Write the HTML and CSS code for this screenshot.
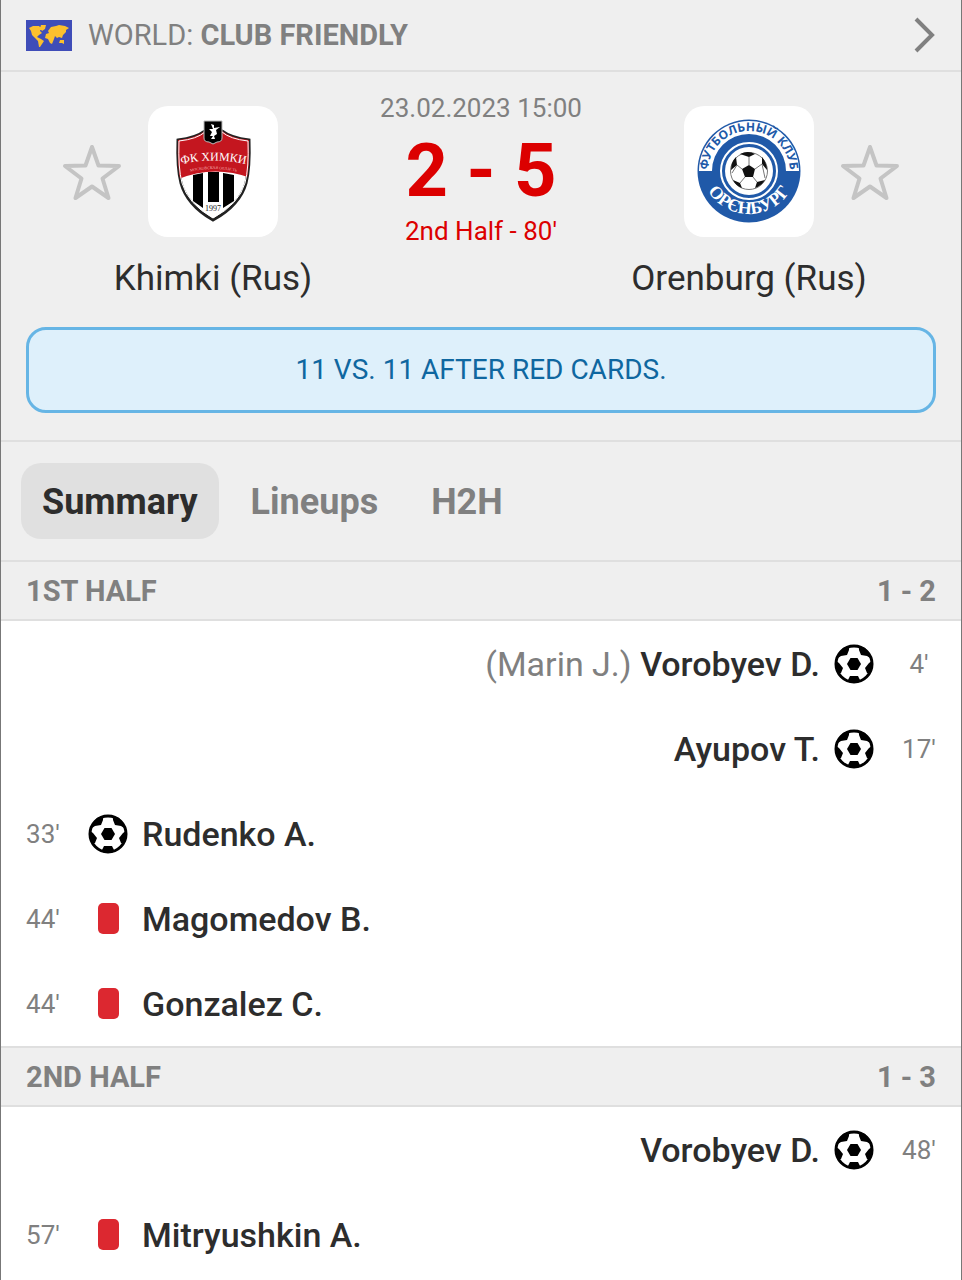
FILE: index.html
```html
<!DOCTYPE html>
<html lang="en">
<head>
    <meta charset="UTF-8">
    <meta name="viewport" content="width=device-width, initial-scale=1.0">
    <title>Khimki - Orenburg</title>
    <link rel="stylesheet" href="styles.css">
</head>
<body>
<!-- shared icons -->
<svg class="sprite" aria-hidden="true">
    <symbol id="ball" viewBox="0 0 40 40">
        <circle cx="20" cy="20" r="18" fill="#fff" stroke="#000" stroke-width="3"/>
        <path d="M5 9l4-5 6-2 0 4-2 5-6 1-3 2zM35 9l-4-5-6-2 0 4 2 5 6 1 3 2zM2 17l3 2 4 5-2 5-4 0zM38 17l-3 2-4 5 2 5 4 0zM16 32h8l2 4-2 3h-8l-2-3z" fill="#000"/>
        <path d="M16.500 14h7l3.500 6-3.500 6h-7l-3.500-6z" fill="#000"/>
    </symbol>
    <symbol id="star" viewBox="0 0 60 60">
        <path d="M30 5l6.500 18.500 20.500.5-16.500 12.500 6 19.500-16.500-11.500-16.500 11.500 6-19.500-16.500-12.500 20.500-.5z" fill="none" stroke="#c4c4c4" stroke-width="4" stroke-linejoin="round"/>
    </symbol>
</svg>

<main class="page">
    <a class="league" href="#">
        <svg class="flag" viewBox="0 0 46 31" aria-hidden="true">
            <path fill="#3f4db8" d="M0 0h46v31H0z"/>
            <path fill="#fcc02e" d="M3 8l4-2 6 0 2 2-1 3 2 2-3 2-2 2 4 2 3 2-2 3-2 3-1 0-1-6-3-3-3-3-1-4zM15 5l5 0-1 4-3 2-2-3zM22 11l3-4 5-1 3-1 6 1 4 2-3 2 0 2-3 3-1 3-3-1-2 1-2-2-1 3-2 5-2-1-2-4-3-1 1-4 3-1zM34 20l4 0 0 4-2-1-3 0z"/>
        </svg>
        <span class="league-name">WORLD: <b>CLUB FRIENDLY</b></span>
        <svg class="chevron" viewBox="0 0 24 40" aria-hidden="true">
            <path d="M4 4l16 16L4 36" fill="none" stroke="#808080" stroke-width="4"/>
        </svg>
    </a>

    <section class="match">
        <div class="teams">
            <div class="team">
                <button class="fav fav-left" type="button" aria-label="Add Khimki to favourites"><svg><use href="#star"/></svg></button>
                <div class="logo">
                    <svg viewBox="0 0 130 130" aria-hidden="true">
                        <defs>
                            <clipPath id="shield"><path d="M30 34Q48 32 57 25h17Q83 32 101 34Q102 62 98 77Q92 99 65 114Q39 99 33 77Q29 62 30 34z"/></clipPath>
                            <path id="khimkiArc" d="M30 59Q65 50 101 59"/>
                            <path id="regionArc" d="M34 68Q65 58 97 68"/>
                        </defs>
                        <path d="M30 34Q48 32 57 25h17Q83 32 101 34Q102 62 98 77Q92 99 65 114Q39 99 33 77Q29 62 30 34z" fill="#fff" stroke="#222" stroke-width="3"/>
                        <g clip-path="url(#shield)">
                            <path d="M28 20h75v52Q65 58 28 74z" fill="#c4161f"/>
                            <path d="M45 69l10-2v35l-10-7zM60 66h11v30H60zM75 67l11 2v26l-11 7z" fill="#000"/>
                        </g>
                        <path d="M31 35Q49 33 57 26h17Q82 33 100 35Q101 62 97 77Q91 98 65 112Q40 98 34 77Q30 62 31 35z" fill="none" stroke="#fff"/>
                        <path d="M56 15h18v17q0 4-5 4l-4 2-4-2q-5 0-5-4z" fill="#000" stroke="#bbb"/>
                        <path d="M63 18l3 1 0 3 6-1-4 3 1 4-3 2 1 3-4 0 2-3-3 0 2-4-3-3 4 0z" fill="#fff"/>
                        <text class="khimki-text"><textPath href="#khimkiArc" startOffset="50%">ФК ХИМКИ</textPath></text>
                        <text class="region-text"><textPath href="#regionArc" startOffset="50%">МОСКОВСКАЯ ОБЛАСТЬ</textPath></text>
                        <text class="year-text" x="65" y="105">1997</text>
                    </svg>
                </div>
                <h2 class="team-name">Khimki (Rus)</h2>
            </div>

            <div class="score">
                <time class="date" datetime="2023-02-23T15:00">23.02.2023 15:00</time>
                <strong class="result">2 - 5</strong>
                <span class="stage">2nd Half - 80'</span>
            </div>

            <div class="team">
                <div class="logo">
                    <svg viewBox="0 0 130 130" aria-hidden="true">
                        <defs>
                            <path id="clubArc" d="M24 66A41 41 0 0 1 106 66"/>
                            <path id="cityArc" d="M17 60A48 48 0 0 0 113 60"/>
                        </defs>
                        <circle cx="65" cy="65" r="51.500" fill="#2059a8"/>
                        <path d="M15 65A50 50 0 0 1 115 65H102A37 37 0 0 0 28 65z" fill="#fff"/>
                        <circle cx="65" cy="65" r="28" fill="none" stroke="#fff" stroke-width="2"/>
                        <circle cx="65" cy="65" r="24" fill="#fff"/>
                        <circle cx="65" cy="65" r="18.500" fill="#fff" stroke="#777"/>
                        <path d="M65 59l6 4-2 8h-8l-3-8zM56 48q8-4 15 0l-6 3zM78 51q5 6 5 13l-5-6zM81 74q-4 6-10 8l2-6zM58 82q-6-2-9-8l7 3zM47 64q0-8 5-13l1 8z" fill="#111"/>
                        <path d="M65 51v8M71 63l7-5M69 71l4 5M61 71l-5 6M58 63l-5-4M53 59l-5 8M78 58l3 14" fill="none" stroke="#777"/>
                        <text class="club-text"><textPath href="#clubArc" startOffset="50%">ФУТБОЛЬНЫЙ КЛУБ</textPath></text>
                        <text class="city-text"><textPath href="#cityArc" startOffset="50%">ОРЄНБУРГ</textPath></text>
                    </svg>
                </div>
                <button class="fav fav-right" type="button" aria-label="Add Orenburg to favourites"><svg><use href="#star"/></svg></button>
                <h2 class="team-name">Orenburg (Rus)</h2>
            </div>
        </div>
        <p class="notice">11 VS. 11 AFTER RED CARDS.</p>
    </section>

    <nav class="tabs">
        <button class="tab active" type="button">Summary</button>
        <button class="tab" type="button">Lineups</button>
        <button class="tab" type="button">H2H</button>
    </nav>

    <section>
        <h3 class="half"><span>1ST HALF</span><span>1 - 2</span></h3>
        <ul class="events">
            <li class="event away"><span class="minute">4'</span><svg class="icon"><use href="#ball"/></svg><span class="player"><span class="assist">(Marin J.)</span> Vorobyev D.</span></li>
            <li class="event away"><span class="minute">17'</span><svg class="icon"><use href="#ball"/></svg><span class="player">Ayupov T.</span></li>
            <li class="event"><span class="minute">33'</span><svg class="icon"><use href="#ball"/></svg><span class="player">Rudenko A.</span></li>
            <li class="event"><span class="minute">44'</span><span class="icon"><i class="red-card"></i></span><span class="player">Magomedov B.</span></li>
            <li class="event"><span class="minute">44'</span><span class="icon"><i class="red-card"></i></span><span class="player">Gonzalez C.</span></li>
        </ul>
    </section>

    <section>
        <h3 class="half"><span>2ND HALF</span><span>1 - 3</span></h3>
        <ul class="events">
            <li class="event away"><span class="minute">48'</span><svg class="icon"><use href="#ball"/></svg><span class="player">Vorobyev D.</span></li>
            <li class="event"><span class="minute">57'</span><span class="icon"><i class="red-card"></i></span><span class="player">Mitryushkin A.</span></li>
        </ul>
    </section>
</main>
</body>
</html>
```
FILE: styles.css
```css
* {
    box-sizing: border-box;
}
body {
    margin: 0;
    font-family: Roboto, "Liberation Sans", sans-serif;
    background-color: #fff;
    color: #2d2d2d;
}
h2, h3, p, ul {
    margin: 0;
    padding: 0;
}
button {
    border: none;
    padding: 0;
    background: none;
    font-family: inherit;
    cursor: pointer;
}
.sprite {
    display: none;
}
.page {
    min-height: 100vh;
    border-left: 1px solid #777;
    border-right: 1px solid #777;
}

/* league bar */
.league {
    display: flex;
    align-items: center;
    gap: 16px;
    height: 72px;
    padding: 0 25px;
    background-color: #efefef;
    border-bottom: 2px solid #dfdfdf;
    color: #808080;
    font-size: 29px;
    text-decoration: none;
}
.flag {
    width: 46px;
    height: 31px;
}
.league-name {
    flex: 1;
}
.chevron {
    width: 24px;
    height: 40px;
}

/* match header */
.match {
    padding: 20px 25px 27px;
    background-color: #efefef;
    border-bottom: 2px solid #dfdfdf;
}
.teams {
    display: grid;
    grid-template-columns: 1fr 210px 1fr;
    padding: 0 24px;
}
.team {
    display: grid;
    grid-template-columns: 1fr 130px 1fr;
    grid-template-rows: 131px auto;
    column-gap: 26px;
    row-gap: 22px;
    align-items: center;
    padding-top: 14px;
}
.logo {
    grid-column: 2;
    height: 131px;
    background-color: #fff;
    border-radius: 20px;
}
.logo svg {
    display: block;
    width: 130px;
    height: 130px;
}
.fav {
    width: 60px;
    height: 60px;
}
.fav svg {
    display: block;
    width: 60px;
    height: 60px;
}
.fav-left {
    grid-column: 1;
    justify-self: end;
}
.fav-right {
    grid-column: 3;
}
.team-name {
    grid-column: 1 / -1;
    font-size: 35px;
    line-height: 40px;
    font-weight: 400;
    text-align: center;
    white-space: nowrap;
}
.score {
    display: flex;
    flex-direction: column;
    align-items: center;
    color: #dc0000;
    white-space: nowrap;
}
.date {
    color: #808080;
    font-size: 26px;
    line-height: 32px;
}
.result {
    font-size: 74px;
    line-height: 94px;
}
.stage {
    font-size: 26px;
    line-height: 26px;
}
.notice {
    margin-top: 28px;
    padding: 25px;
    border: 3px solid #66b5e5;
    border-radius: 20px;
    background-color: #def0fb;
    color: #0f67a0;
    font-size: 28px;
    line-height: 30px;
    text-align: center;
}

/* lettering on the club crests */
.khimki-text, .region-text, .year-text, .club-text, .city-text {
    text-anchor: middle;
    font-family: "Liberation Serif", serif;
}
.khimki-text {
    font-size: 12px;
    fill: #fff;
}
.region-text {
    font-size: 4px;
    fill: #f3b0b0;
}
.year-text {
    font-size: 8px;
    fill: #222;
}
.club-text {
    font-family: "Open Sans", sans-serif;
    font-size: 12px;
    font-weight: 700;
    fill: #2059a8;
}
.city-text {
    font-size: 18px;
    font-weight: 700;
    fill: #fff;
}

/* tabs */
.tabs {
    display: flex;
    gap: 11px;
    padding: 21px 20px;
    background-color: #efefef;
}
.tab {
    padding: 19px 21px 17px;
    border-radius: 20px;
    color: #808080;
    font-size: 36px;
    line-height: 40px;
    font-weight: 700;
}
.tab.active {
    background-color: #e0e0e0;
    color: #2d2d2d;
}

/* events */
.half {
    display: flex;
    align-items: center;
    justify-content: space-between;
    height: 61px;
    padding: 0 25px;
    background-color: #efefef;
    border-top: 2px solid #dfdfdf;
    border-bottom: 2px solid #dfdfdf;
    color: #808080;
    font-size: 29px;
    font-weight: 700;
}
.events {
    list-style: none;
}
.event {
    display: flex;
    align-items: center;
    height: 85px;
    padding: 0 25px;
}
.away {
    flex-direction: row-reverse;
}
.minute {
    width: 34px;
    color: #808080;
    font-size: 26px;
    font-weight: 400;
    text-align: center;
}
.icon {
    display: flex;
    align-items: center;
    justify-content: center;
    width: 40px;
    height: 40px;
    margin: 0 14px 0 28px;
}
.away .icon {
    margin: 0 28px 0 14px;
}
.red-card {
    width: 21px;
    height: 31px;
    border-radius: 5px;
    background-color: #dc2830;
}
.player {
    font-size: 34px;
    font-weight: 500;
}
.assist {
    color: #808080;
    font-weight: 400;
}
```
